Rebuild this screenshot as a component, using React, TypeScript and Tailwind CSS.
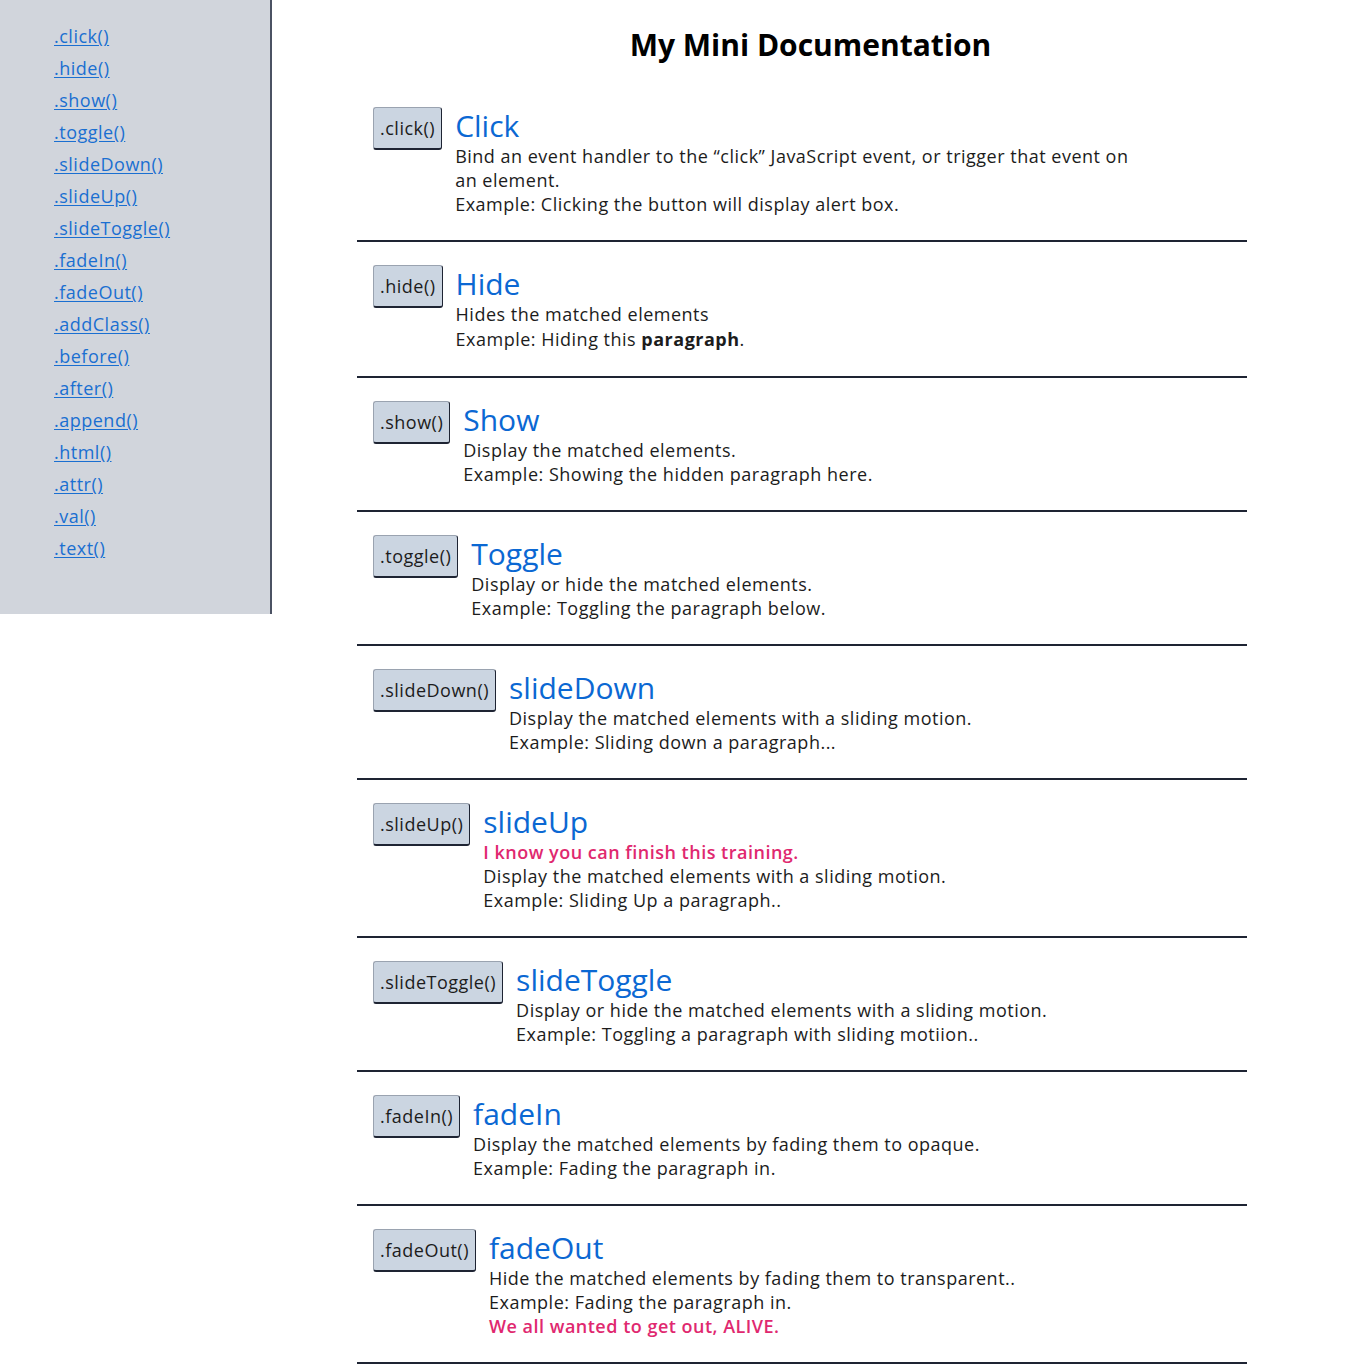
import React from "react";

const links = [
  ".click()", ".hide()", ".show()", ".toggle()", ".slideDown()", ".slideUp()",
  ".slideToggle()", ".fadeIn()", ".fadeOut()", ".addClass()", ".before()",
  ".after()", ".append()", ".html()", ".attr()", ".val()", ".text()",
];

type Section = {
  btn: string;
  title: string;
  lines: React.ReactNode[];
};

const Pink = ({ children }: { children: React.ReactNode }) => (
  <span className="font-semibold text-[#e0286f]">{children}</span>
);

const sections: Section[] = [
  {
    btn: ".click()",
    title: "Click",
    lines: [
      "Bind an event handler to the \u201cclick\u201d JavaScript event, or trigger that event on",
      "an element.",
      "Example: Clicking the button will display alert box.",
    ],
  },
  {
    btn: ".hide()",
    title: "Hide",
    lines: [
      "Hides the matched elements",
      <span className="leading-[26px]">
        Example: Hiding this <b className="font-bold">paragraph</b>.
      </span>,
    ],
  },
  {
    btn: ".show()",
    title: "Show",
    lines: ["Display the matched elements.", "Example: Showing the hidden paragraph here."],
  },
  {
    btn: ".toggle()",
    title: "Toggle",
    lines: ["Display or hide the matched elements.", "Example: Toggling the paragraph below."],
  },
  {
    btn: ".slideDown()",
    title: "slideDown",
    lines: ["Display the matched elements with a sliding motion.", "Example: Sliding down a paragraph..."],
  },
  {
    btn: ".slideUp()",
    title: "slideUp",
    lines: [
      <Pink>I know you can finish this training.</Pink>,
      "Display the matched elements with a sliding motion.",
      "Example: Sliding Up a paragraph..",
    ],
  },
  {
    btn: ".slideToggle()",
    title: "slideToggle",
    lines: [
      "Display or hide the matched elements with a sliding motion.",
      "Example: Toggling a paragraph with sliding motiion..",
    ],
  },
  {
    btn: ".fadeIn()",
    title: "fadeIn",
    lines: ["Display the matched elements by fading them to opaque.", "Example: Fading the paragraph in."],
  },
  {
    btn: ".fadeOut()",
    title: "fadeOut",
    lines: [
      "Hide the matched elements by fading them to transparent..",
      "Example: Fading the paragraph in.",
      <Pink>We all wanted to get out, ALIVE.</Pink>,
    ],
  },
];

export default function App() {
  return (
    <div
      className="flex min-h-[1364px] bg-white text-[#1c1c1c]"
      style={{ fontFamily: '"Open Sans", "Noto Sans", sans-serif' }}
    >
      <aside className="h-[614px] w-[272px] shrink-0 border-r-2 border-[#4b5263] bg-[#d1d5dc] pl-[54px] pt-5">
        <ul>
          {links.map((l) => (
            <li key={l} className="text-[18px] leading-8 tracking-[0.5px]">
              <a href="#" className="text-[#1a6fd1] underline underline-offset-2">
                {l}
              </a>
            </li>
          ))}
        </ul>
      </aside>

      <main className="flex-1 pt-[27px]">
        <h1 className="mb-[21px] text-center text-[30px] font-bold leading-9 text-black">
          My Mini Documentation
        </h1>
        <div className="ml-[85px] w-[890px]">
          {sections.map((s) => (
            <section
              key={s.btn}
              className="flex items-start gap-[13px] border-b-2 border-[#1e2433] px-4 py-6"
            >
              <button className="-mt-px rounded-[3px] border border-[#9aa3b0] border-b-2 border-b-[#1e2433] border-r-[#1e2433] bg-[#cbd5e1] px-[6px] py-[8px] text-[18px] leading-6 tracking-[0.5px] text-[#1c1c1c]">
                {s.btn}
              </button>
              <div>
                <h2 className="text-[30px] leading-9 text-[#0b68d3]">{s.title}</h2>
                {s.lines.map((ln, i) => (
                  <p key={i} className="text-[18px] leading-6 tracking-[0.5px]">
                    {ln}
                  </p>
                ))}
              </div>
            </section>
          ))}
        </div>
      </main>
    </div>
  );
}
